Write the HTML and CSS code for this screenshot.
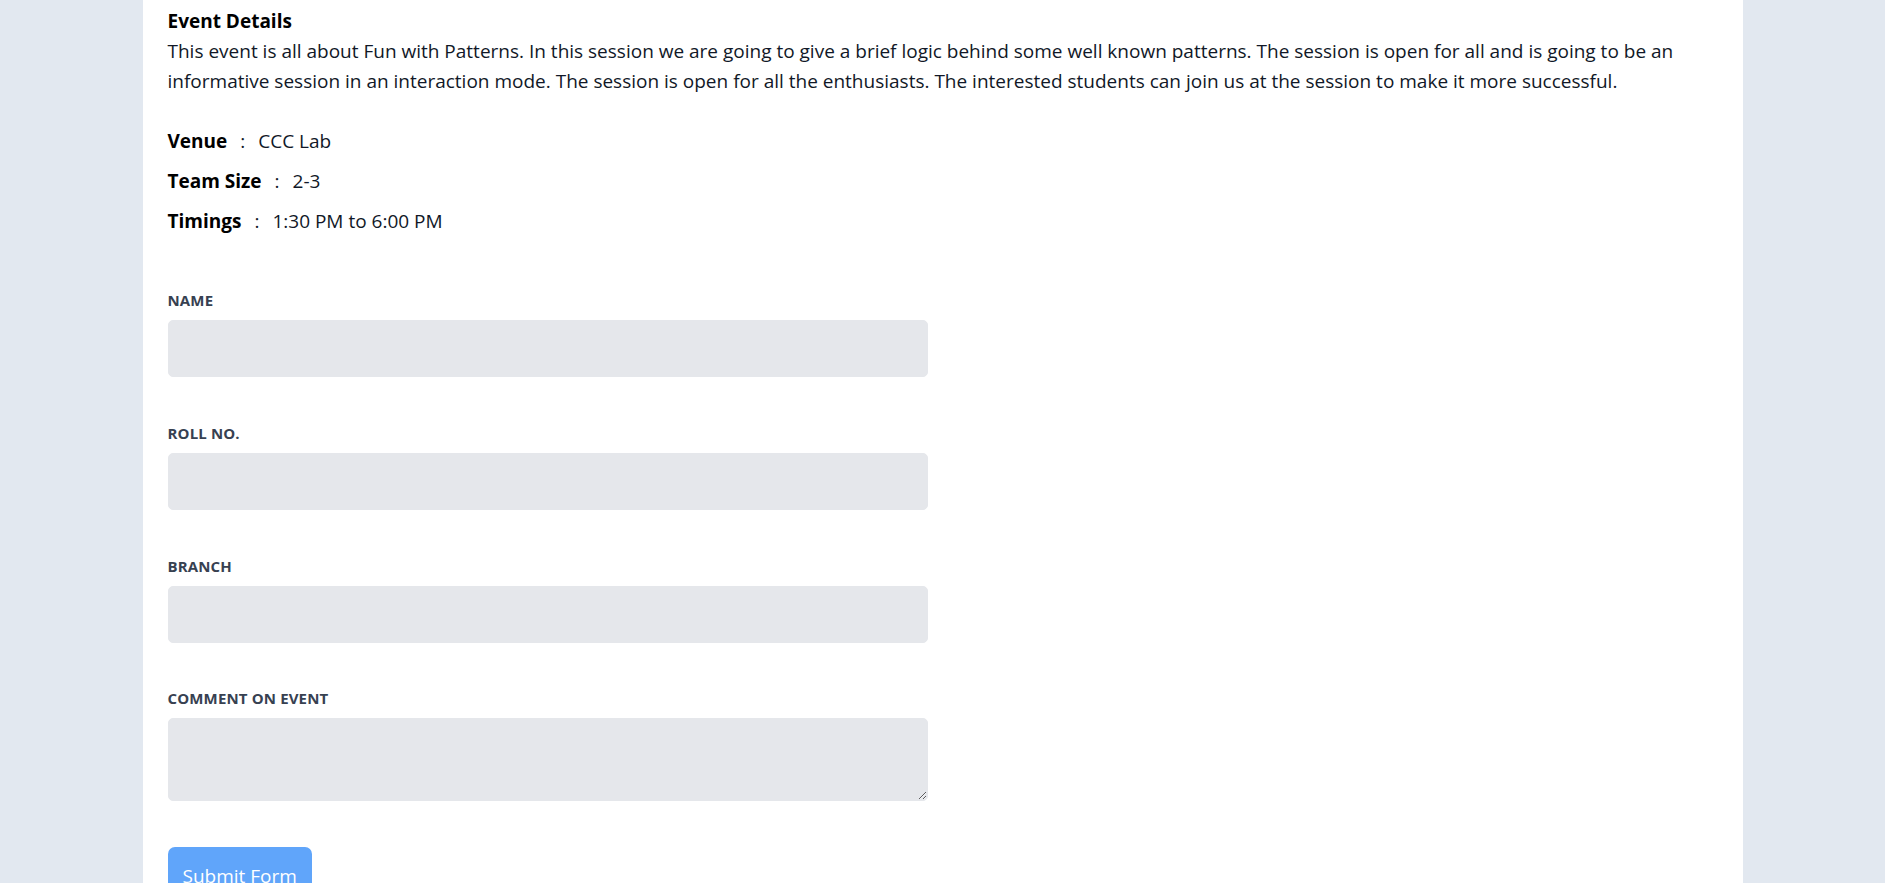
FILE: index.html
```html
<!DOCTYPE html>
<html lang="en">
<head>
<meta charset="utf-8">
<title>Event Registration</title>
<link rel="stylesheet" href="styles.css">
</head>
<body>
<div class="page">
  <main class="card">
    <section class="details">
      <h2 class="title">Event Details</h2>
      <p class="desc">This event is all about Fun with Patterns. In this session we are going to give a brief logic behind some well known patterns. The session is open for all and is going to be an informative session in an interaction mode. The session is open for all the enthusiasts. The interested students can join us at the session to make it more successful.</p>
      <div class="info">
        <div class="row"><span class="key">Venue</span><span class="sep">:</span><span class="val">CCC Lab</span></div>
        <div class="row"><span class="key">Team Size</span><span class="sep">:</span><span class="val">2-3</span></div>
        <div class="row"><span class="key">Timings</span><span class="sep">:</span><span class="val">1:30 PM to 6:00 PM</span></div>
      </div>
    </section>
    <form class="form">
      <div class="field">
        <label class="label" for="name">Name</label>
        <input class="input" id="name" type="text">
      </div>
      <div class="field">
        <label class="label" for="roll">Roll No.</label>
        <input class="input" id="roll" type="text">
      </div>
      <div class="field">
        <label class="label" for="branch">Branch</label>
        <input class="input" id="branch" type="text">
      </div>
      <div class="field">
        <label class="label" for="comment">Comment on Event</label>
        <textarea class="input textarea" id="comment" rows="2"></textarea>
      </div>
      <button class="submit" type="button">Submit Form</button>
    </form>
  </main>
</div>
</body>
</html>
```
FILE: styles.css
```css
* { box-sizing: border-box; }
html, body { margin: 0; padding: 0; }
body {
  background: #e2e8f0;
  font-family: "Open Sans", "Noto Sans", sans-serif;
  color: #111827;
  font-size: 19px;
  line-height: 1.5;
  overflow: hidden;
}
.page { width: 1600px; margin: 0 auto; }
.card {
  background: #fff;
  padding: 6px 25px 40px;
  min-height: 883px;
}
.title { margin: 0; font-size: 19px; font-weight: 700; color: #000; line-height: 30px; }
.desc { margin: 0 0 30px; line-height: 30px; }
.row { line-height: 30px; margin-bottom: 10px; }
.key { font-weight: 700; color: #000; }
.sep { margin: 0 13px; }
.form { margin-top: 54px; }
.field {
  width: 760px;
  display: flex;
  flex-direction: column;
  margin-bottom: 30.8px;
}
.label {
  display: block;
  text-transform: uppercase;
  letter-spacing: 0.01em;
  color: #374151;
  font-size: 15px;
  font-weight: 700;
  line-height: 20px;
  margin-bottom: 10px;
}
.input {
  display: block;
  width: 100%;
  background: #e5e7eb;
  border: 1.25px solid #e5e7eb;
  border-radius: 5px;
  padding: 15px 20px;
  margin-bottom: 15px;
  font: inherit;
  line-height: 25px;
  color: #374151;
  outline: none;
}
.textarea { height: 82.5px; }
.submit {
  background: #60a5fa;
  color: #fff;
  border: 0;
  border-radius: 7px;
  padding: 14px 15px;
  font: inherit;
  line-height: 30px;
}
```
